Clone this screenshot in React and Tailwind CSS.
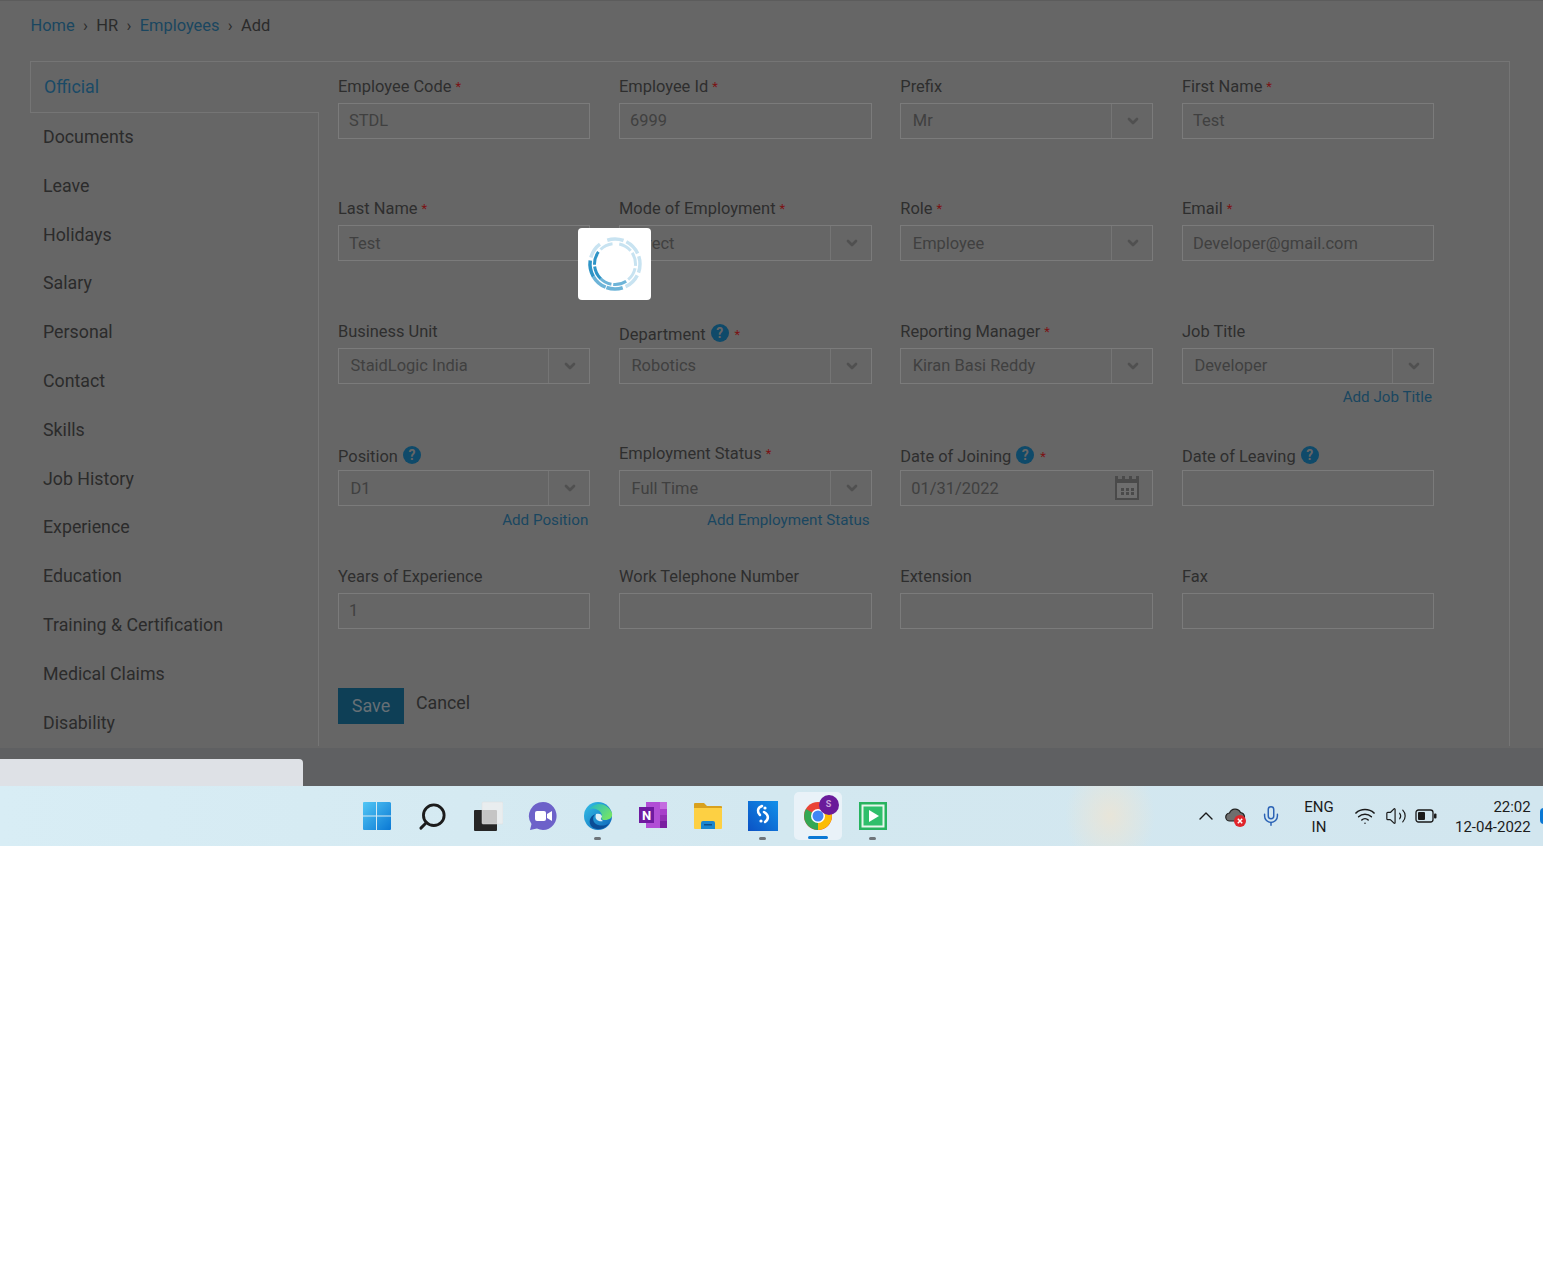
import { ChevronDown, ChevronUp, Mic, Wifi, Volume2, Search } from "lucide-react";

const menu = ["Documents", "Leave", "Holidays", "Salary", "Personal", "Contact", "Skills", "Job History", "Experience", "Education", "Training & Certification", "Medical Claims", "Disability"];

const rows = [
	[
		{ label: "Employee Code", req: true, value: "STDL" },
		{ label: "Employee Id", req: true, value: "6999" },
		{ label: "Prefix", value: "Mr", select: true },
		{ label: "First Name", req: true, value: "Test" },
	],
	[
		{ label: "Last Name", req: true, value: "Test" },
		{ label: "Mode of Employment", req: true, value: "Direct", select: true },
		{ label: "Role", req: true, value: "Employee", select: true },
		{ label: "Email", req: true, value: "Developer@gmail.com" },
	],
	[
		{ label: "Business Unit", value: "StaidLogic India", select: true },
		{ label: "Department", help: true, req: true, value: "Robotics", select: true },
		{ label: "Reporting Manager", req: true, value: "Kiran Basi Reddy", select: true },
		{ label: "Job Title", value: "Developer", select: true, link: "Add Job Title" },
	],
	[
		{ label: "Position", help: true, value: "D1", select: true, link: "Add Position" },
		{ label: "Employment Status", req: true, value: "Full Time", select: true, link: "Add Employment Status" },
		{ label: "Date of Joining", help: true, req: true, value: "01/31/2022", date: true },
		{ label: "Date of Leaving", help: true, value: "" },
	],
	[
		{ label: "Years of Experience", value: "1" },
		{ label: "Work Telephone Number", value: "" },
		{ label: "Extension", value: "" },
		{ label: "Fax", value: "" },
	],
];

function HelpIcon() {
	return (
		<span className="-mt-[1px] ml-[5px] inline-flex h-[18px] w-[18px] items-center justify-center rounded-full bg-[#0f4a6a] text-[14px] font-bold leading-none text-[#666666]">
			?
		</span>
	);
}

function CalendarIcon() {
	return (
		<svg width="26" height="26" viewBox="0 0 26 26" className="mr-[12px] shrink-0">
			<rect x="1" y="1" width="24" height="24" fill="#4a4a4a" />
			<rect x="4" y="1" width="4" height="3" fill="#666666" />
			<rect x="11" y="1" width="4" height="3" fill="#666666" />
			<rect x="18" y="1" width="4" height="3" fill="#666666" />
			<rect x="3" y="8" width="20" height="15" fill="#6e6e6e" />
			{[7, 12, 17].map((x) => [13, 17].map((y) => <rect key={x + "-" + y} x={x} y={y} width="3" height="3" fill="#4a4a4a" />))}
		</svg>
	);
}

function Field({ f }) {
	const nudge = f.help ? "mt-[3px]" : "";
	return (
		<div className="h-[122.4px]">
			<div className={"flex h-[26px] items-start text-[16.45px] leading-[20px] text-[#2e2e2e] " + nudge}>
				<span>{f.label}</span>
				{f.help && <HelpIcon />}
				{f.req && <span className={(f.help ? "ml-[6px]" : "ml-[4px]") + " text-[13px] text-[#7c1214]"}>*</span>}
			</div>
			<div className={"flex h-[36px] items-center border border-[#7b7b7b] text-[16.45px] text-[#404040] " + (f.help ? "-mt-[3px]" : "")}>
				<span className={"flex-1 pt-[1.5px] " + (f.select ? "pl-[11.5px]" : "pl-[10px]")}>{f.value}</span>
				{f.date && <CalendarIcon />}
				{f.select && (
					<span className="flex h-full w-[41px] items-center justify-center border-l border-[#757575] pl-[2px]">
						<ChevronDown size={16} strokeWidth={4} className="text-[#505050]" />
					</span>
				)}
			</div>
			{f.link && <div className="mt-[3.5px] pr-[2px] text-right text-[15.2px] leading-[20px] text-[#1a4660]">{f.link}</div>}
		</div>
	);
}

function Spinner() {
	const arc = (r, a0, a1) => {
		const p = (a) => [65 + r * Math.cos((a * Math.PI) / 180), 65 + r * Math.sin((a * Math.PI) / 180)];
		const [x0, y0] = p(a0);
		const [x1, y1] = p(a1);
		return `M${x0} ${y0}A${r} ${r} 0 0 1 ${x1} ${y1}`;
	};
	const col = (a) => {
		if (a >= 135 && a < 180) return "#2e94c6";
		if (a >= 45 && a < 135) return "#6db4d8";
		return "#c8e3f1";
	};
	const outer = [-108, -63, -18, 27, 72, 112, 150, 195];
	const inner = [-78, -33, 12, 57, 100, 135, 178, 225];
	return (
		<svg width="60" height="60" viewBox="35 35 60 60">
			{outer.map((a) => (
				<path key={"o" + a} d={arc(25, a, a + 38)} fill="none" stroke={col(a)} strokeWidth="3.5" />
			))}
			{inner.map((a) => (
				<path key={"i" + a} d={arc(20.5, a, a + 38)} fill="none" stroke={col(a)} strokeWidth="3" />
			))}
		</svg>
	);
}

function WinIcon() {
	return (
		<svg width="30" height="30" viewBox="0 0 30 30">
			<defs>
				<linearGradient id="win1" x1="0" y1="0" x2="1" y2="1">
					<stop offset="0" stopColor="#52c7f5" />
					<stop offset="1" stopColor="#0a78d4" />
				</linearGradient>
			</defs>
			<path d="M0 2a1 1 0 0 1 1-1h12v13.500H0zM14 1h12a2 2 0 0 1 2 1v12.500H14zM0 15.500h13V29H1a1 1 0 0 1-1-1zM14 15.500h14V28a1 1 0 0 1-1 1H14z" fill="url(#win1)" />
		</svg>
	);
}

function TaskViewIcon() {
	return (
		<svg width="30" height="30" viewBox="0 0 30 30">
			<rect x="1" y="9" width="23" height="21" rx="1" fill="#262626" />
			<rect x="9" y="1" width="21" height="22" rx="1" fill="#eeeeee" fillOpacity="0.8" stroke="#dcdcdc" strokeWidth="0.5" />
		</svg>
	);
}

function TeamsIcon() {
	return (
		<svg width="30" height="30" viewBox="0 0 30 30">
			<path d="M15 1a13.500 14 0 1 1-6 26.500L2 29l1.500-6A14 14 0 0 1 15 1z" fill="#6d62c9" />
			<rect x="7" y="10" width="11" height="10" rx="2" fill="#fff" />
			<path d="M19 13l5-3v10l-5-3z" fill="#fff" />
		</svg>
	);
}

function EdgeIcon() {
	return (
		<svg width="30" height="30" viewBox="0 0 30 30">
			<defs>
				<linearGradient id="edge1" x1="0" y1="0" x2="1" y2="1">
					<stop offset="0" stopColor="#35c1e8" />
					<stop offset="1" stopColor="#0b62b8" />
				</linearGradient>
				<linearGradient id="edge2" x1="0" y1="0" x2="1" y2="0.6">
					<stop offset="0" stopColor="#22b7c9" />
					<stop offset="1" stopColor="#72e36a" />
				</linearGradient>
			</defs>
			<circle cx="15" cy="15" r="14" fill="url(#edge1)" />
			<path d="M6 9C10 1 24 0 29 12c1 5-3 7-7 7-4 0-4-2-3-4C19 10 11 5 6 9z" fill="url(#edge2)" />
			<path d="M13 13c-4 2-4 9 2 11 4 1 8 1 11-2-3 6-12 8-17 4-4-4-3-11 4-13z" fill="#0a4d96" />
			<path d="M13 13c3-1 6 0 6 3-2 1-1 3 1 4-4 1-9-1-7-7z" fill="#dfeef5" />
		</svg>
	);
}

function OneNoteIcon() {
	return (
		<svg width="30" height="30" viewBox="0 0 30 30">
			<rect x="8" y="1" width="21" height="26" fill="#b14ed6" />
			<rect x="22" y="1" width="7" height="7" fill="#c46ce0" />
			<rect x="22" y="8" width="7" height="6" fill="#a83fca" />
			<rect x="22" y="14" width="7" height="6" fill="#9230b4" />
			<rect x="22" y="20" width="7" height="7" fill="#7a1fa0" />
			<rect x="1" y="6" width="15" height="16" fill="#6f1aa0" />
			<text x="8.500" y="19" textAnchor="middle" fontSize="13" fontWeight="700" fontFamily="Roboto, sans-serif" fill="#fff">N</text>
		</svg>
	);
}

function FolderIcon() {
	return (
		<svg width="30" height="30" viewBox="0 0 30 30">
			<path d="M2 2h9l3 3h14a1 1 0 0 1 1 1v3H1V3a1 1 0 0 1 1-1z" fill="#d9a11e" />
			<path d="M1 7h28v20a1 1 0 0 1-1 1H2a1 1 0 0 1-1-1z" fill="#fdd043" />
			<path d="M8 28v-6a2 2 0 0 1 2-2h10a2 2 0 0 1 2 2v6z" fill="#1a86d0" />
			<rect x="11" y="23" width="8" height="1.500" fill="#0f4f8a" />
		</svg>
	);
}

function StaidIcon() {
	return (
		<svg width="30" height="30" viewBox="0 0 30 30">
			<defs>
				<linearGradient id="sl1" x1="0" y1="1" x2="1" y2="0">
					<stop offset="0" stopColor="#0b52c4" />
					<stop offset="1" stopColor="#1190ea" />
				</linearGradient>
			</defs>
			<rect width="30" height="30" fill="url(#sl1)" />
			<path d="M14 5c-5 2-5 6-2 9" fill="none" stroke="#fff" strokeWidth="2.500" strokeLinecap="round" />
			<path d="M16 11c5 3 5 7 1 10" fill="none" stroke="#fff" strokeWidth="2.500" strokeLinecap="round" />
			<circle cx="17" cy="7" r="1.600" fill="#fff" />
			<circle cx="13" cy="20" r="1.600" fill="#fff" />
		</svg>
	);
}

function ChromeIcon() {
	return (
		<div className="relative h-[48px] w-[48px] rounded-[5px] bg-[#e9f2f8]">
			<svg width="30" height="30" viewBox="0 0 30 30" className="absolute left-[9px] top-[9px]">
				<circle cx="15" cy="15" r="14" fill="#ea4335" />
				<path d="M15 15L27 8a14 14 0 0 1-12 21z" fill="#fbbc05" />
				<path d="M15 15L15 29A14 14 0 0 1 3 8z" fill="#34a853" />
				<circle cx="15" cy="15" r="7" fill="#fff" />
				<circle cx="15" cy="15" r="5.500" fill="#4285f4" />
			</svg>
			<span className="absolute left-[25px] top-[3px] flex h-[20px] w-[20px] items-center justify-center rounded-full bg-[#6a1b9a] text-[9px] font-bold text-[#c9a5da]">
				S
			</span>
			<span className="absolute bottom-[1px] left-[14px] h-[3px] w-[20px] rounded-full bg-[#0a78d4]" />
		</div>
	);
}

function PlayIcon() {
	return (
		<svg width="30" height="30" viewBox="0 0 30 30">
			<rect x="1" y="1" width="28" height="28" fill="#27b35f" />
			<rect x="3.500" y="3.500" width="23" height="23" fill="#e6f6ec" />
			<rect x="5.500" y="5.500" width="19" height="19" fill="#2fbf6b" />
			<path d="M11 9l10 6-10 6z" fill="#fff" />
		</svg>
	);
}

function CloudIcon() {
	return (
		<svg width="24" height="24" viewBox="0 0 24 24">
			<path d="M6 17a4 4 0 0 1-.5-8A6 6 0 0 1 16.500 8.500 4.500 4.500 0 0 1 18 17z" fill="#6e6e6e" stroke="#222" strokeWidth="1.200" />
			<circle cx="16" cy="17" r="6" fill="#e0252b" />
			<path d="M13.800 14.800l4.400 4.400M18.200 14.800l-4.400 4.400" stroke="#fff" strokeWidth="1.500" />
		</svg>
	);
}

function BatteryIcon() {
	return (
		<svg width="22" height="14" viewBox="0 0 22 14">
			<rect x="1" y="1" width="17" height="12" rx="2.500" fill="none" stroke="#1a1a1a" strokeWidth="1.300" />
			<rect x="3" y="3" width="7" height="8" rx="1" fill="#1a1a1a" />
			<rect x="19" y="4.500" width="2.500" height="5" rx="1" fill="#1a1a1a" />
		</svg>
	);
}

function TaskItem({ children, dot }) {
	return (
		<div className="relative flex h-[60px] w-[55px] shrink-0 items-center justify-center">
			{children}
			{dot && <span className="absolute bottom-[6px] left-[24px] h-[3px] w-[7px] rounded-full bg-[#6e7479]" />}
		</div>
	);
}

export default function App() {
	return (
		<div className="relative min-h-[1270px] bg-white font-['Roboto',sans-serif]">
			{/* Dimmed page */}
			<div className="h-[748px] overflow-hidden border-t border-[#5c5c5c] bg-[#666666] px-[30px]">
				<div className="flex h-[60px] items-start gap-[8.3px] pl-[0.5px] pt-[15px] text-[16.45px] leading-[20px] text-[#2b2b2b]">
					<span className="text-[#1a4660]">Home</span>
					<span>›</span>
					<span>HR</span>
					<span>›</span>
					<span className="text-[#1a4660]">Employees</span>
					<span>›</span>
					<span>Add</span>
				</div>
				<div className="flex h-[685px] w-[1480px] border-r border-t border-[#757575]">
					<div className="flex w-[289px] shrink-0 flex-col">
						<div className="flex h-[51px] shrink-0 items-center border-b border-l border-[#757575] pl-[13px] text-[17.8px] text-[#1a4a66]">
							Official
						</div>
						<div className="min-h-0 flex-1 border-r border-[#757575]">
							{menu.map((m) => (
								<div key={m} className="flex h-[48.8px] items-center pl-[13px] text-[17.8px] text-[#2b2b2b]">
									{m}
								</div>
							))}
						</div>
					</div>
					<div className="pl-[19px] pt-[15px]">
						<div className="w-[1096px]">
							{rows.map((row, i) => (
								<div key={i} className="grid grid-cols-[252.33px_252.67px_253px_252px] gap-x-[28.67px]">
									{row.map((f) => (
										<Field key={f.label} f={f} />
									))}
								</div>
							))}
						</div>
						<div className="mt-[-1px] flex items-start">
							<button className="h-[36px] w-[66px] bg-[#0e3f56] text-[18px] text-[#666f75]">Save</button>
							<span className="ml-[12px] text-[17.8px] leading-[30px] text-[#2b2b2b]">Cancel</span>
						</div>
					</div>
				</div>
			</div>

			{/* Browser download shelf */}
			<div className="flex h-[38px] items-end bg-[#5f6062]">
				<div className="h-[27px] w-[303px] rounded-tr-[4px] bg-[#dee1e6]" />
			</div>

			{/* Windows taskbar */}
			<div className="flex h-[60px] items-center overflow-hidden bg-[radial-gradient(ellipse_45px_55px_at_1110px_30px,#e8e5d9,transparent),linear-gradient(90deg,#d8edf5_0%,#d3e8f0_50%,#d2e6ef_100%)] pl-[350px]">
				<TaskItem><WinIcon /></TaskItem>
				<TaskItem><Search size={31} strokeWidth={2.2} className="-scale-x-100 text-[#1c1c1c]" /></TaskItem>
				<TaskItem><TaskViewIcon /></TaskItem>
				<TaskItem><TeamsIcon /></TaskItem>
				<TaskItem dot><EdgeIcon /></TaskItem>
				<TaskItem><OneNoteIcon /></TaskItem>
				<TaskItem><FolderIcon /></TaskItem>
				<TaskItem dot><StaidIcon /></TaskItem>
				<TaskItem><ChromeIcon /></TaskItem>
				<TaskItem dot><PlayIcon /></TaskItem>

				<div className="ml-[294px] flex shrink-0 items-center">
					<ChevronUp size={24} strokeWidth={1.4} className="text-[#1a1a1a]" />
					<span className="ml-[6px]"><CloudIcon /></span>
					<Mic size={22} strokeWidth={1.6} className="ml-[12px] text-[#2a62b5]" />
				</div>
				<div className="ml-[17px] mt-[2px] w-[40px] shrink-0 text-center text-[15px] leading-[20px] text-[#1c1c1c]">
					ENG
					<br />
					IN
				</div>
				<Wifi size={22} strokeWidth={1.6} className="ml-[15px] shrink-0 text-[#1a1a1a]" />
				<Volume2 size={22} strokeWidth={1.3} className="ml-[9px] shrink-0 text-[#1a1a1a]" />
				<span className="ml-[8px] shrink-0"><BatteryIcon /></span>
				<div className="ml-[18px] mt-[2px] shrink-0 whitespace-nowrap text-right text-[15px] leading-[20px] text-[#1c1c1c]">
					22:02
					<br />
					12-04-2022
				</div>
				<span className="ml-[9px] h-[16px] w-[8px] shrink-0 rounded-full bg-[#0a78d4]" />
			</div>

			{/* Loading overlay */}
			<div className="absolute left-[578px] top-[228px] flex h-[72px] w-[73px] items-center justify-center rounded-[4px] bg-white">
				<Spinner />
			</div>
		</div>
	);
}
